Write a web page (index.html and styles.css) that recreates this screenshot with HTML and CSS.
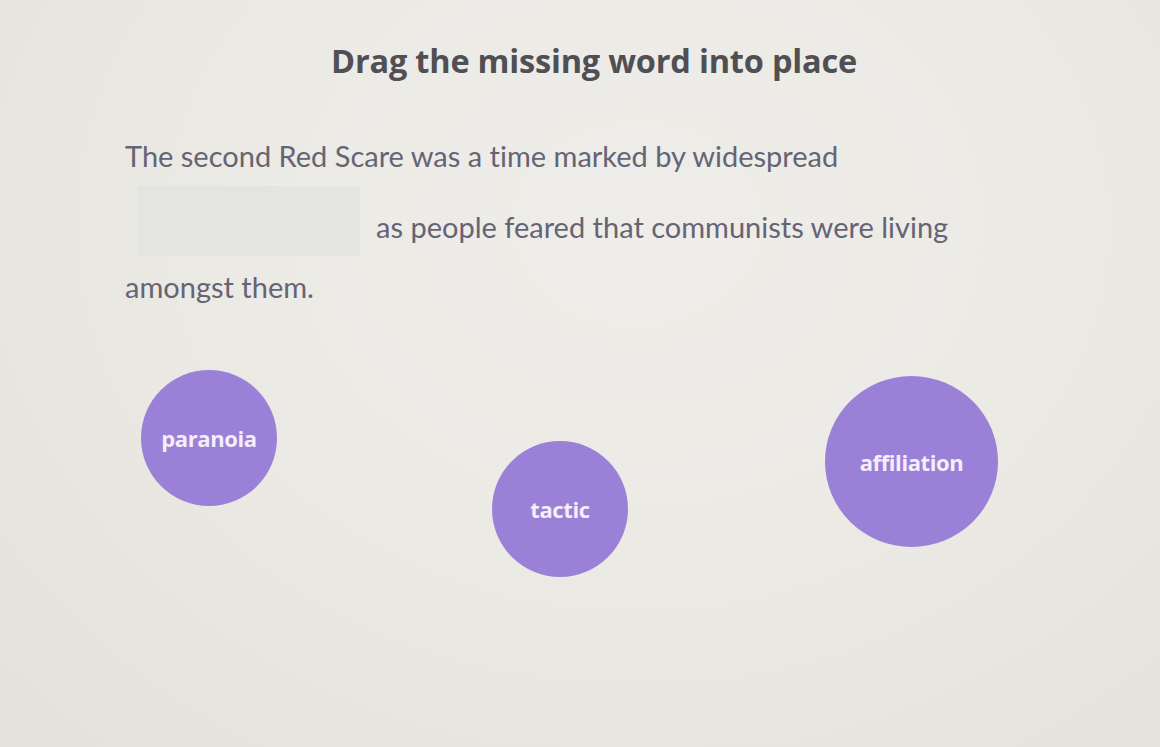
FILE: index.html
```html
<!DOCTYPE html>
<html lang="en">
<head>
    <meta charset="UTF-8">
    <meta name="viewport" content="width=device-width, initial-scale=1.0">
    <title>Drag the missing word</title>
    <link rel="stylesheet" href="styles.css">
</head>
<body>
    <div class="quiz">
        <h1 class="title">Drag the missing word into place</h1>

        <p class="sentence">
            The second Red Scare was a time marked by widespread
            <span class="blank" id="dropZone"></span>as people feared that communists were living
            amongst them.
        </p>

        <div class="stage">
            <div class="word word-sm word-paranoia" draggable="true">paranoia</div>
            <div class="word word-sm word-tactic" draggable="true">tactic</div>
            <div class="word word-lg word-affiliation" draggable="true">affiliation</div>
        </div>
    </div>
</body>
</html>
```

FILE: styles.css
```css
* { margin: 0; padding: 0; box-sizing: border-box; }
html, body { height: 100%; }
body {
    font-family: Lato, "Open Sans", sans-serif;
    font-variant-ligatures: none;
    background: radial-gradient(ellipse at 55% 30%, #eeede9 0%, #ebeae5 45%, #e2e1dc 100%);
    overflow: hidden;
}
.quiz {
    position: relative;
    height: 747px;
}
.title {
    font-family: "Open Sans", Lato, sans-serif;
    font-size: 32.5px;
    font-weight: 700;
    color: #4f4f54;
    text-align: center;
    padding: 37px 0 0 28px;
    line-height: 48px;
    letter-spacing: -0.2px;
}
.sentence {
    width: 840px;
    margin: 41px 0 0 125px;
    font-size: 29px;
    line-height: 60px;
    color: #656474;
}
.blank {
    display: inline-block;
    width: 223px;
    height: 70px;
    margin: 0 16px 0 12px;
    vertical-align: -18px;
    background: #e4e4e2;
    border-radius: 2px;
}
/* free-floating answer bubbles */
.stage {
    position: absolute;
    left: 0;
    top: 0;
    width: 100%;
    height: 100%;
    pointer-events: none;
}
.word {
    position: absolute;
    display: flex;
    align-items: center;
    justify-content: center;
    border-radius: 50%;
    background: #9b80d7;
    color: #f4eefb;
    font-family: "Open Sans", Lato, sans-serif;
    font-weight: 700;
    font-size: 22px;
    letter-spacing: -0.4px;
    cursor: grab;
    pointer-events: auto;
}
.word-sm { width: 136px; height: 136px; }
.word-lg { width: 173px; height: 171px; }
.word-paranoia { left: 141px; top: 370px; }
.word-tactic { left: 492px; top: 441px; }
.word-affiliation { left: 825px; top: 376px; }
```
